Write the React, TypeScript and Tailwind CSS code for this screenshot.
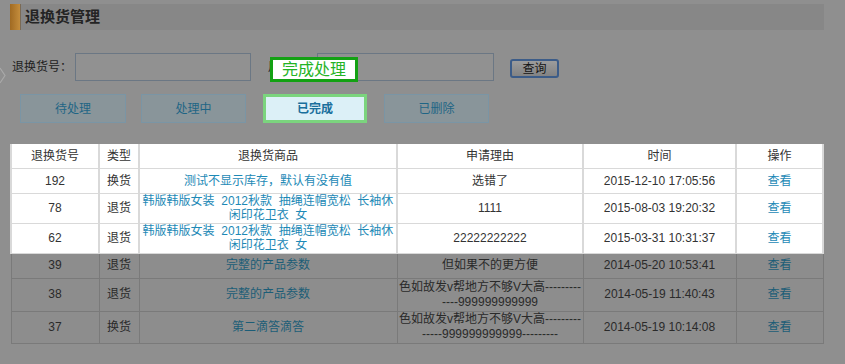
import React from "react";

type Row = {
  id: string;
  kind: string;
  goods: React.ReactNode;
  reason: React.ReactNode;
  time: string;
  h: string;
  lit: boolean;
};

const longGoods = (
  <>
    韩版韩版女装{"\u00a0 "}2012秋款{"\u00a0 "}抽绳连帽宽松{"\u00a0 "}长袖休
    <br />
    闲印花卫衣{"\u00a0 "}女
  </>
);

const rows: Row[] = [
  { id: "192", kind: "换货", goods: "测试不显示库存，默认有没有值", reason: "选错了", time: "2015-12-10 17:05:56", h: "h-[25px]", lit: true },
  { id: "78", kind: "退货", goods: longGoods, reason: "1111", time: "2015-08-03 19:20:32", h: "h-[30px]", lit: true },
  { id: "62", kind: "退货", goods: longGoods, reason: "22222222222", time: "2015-03-31 10:31:37", h: "h-[30px]", lit: true },
  { id: "39", kind: "退货", goods: "完整的产品参数", reason: "但如果不的更方便", time: "2014-05-20 10:53:41", h: "h-[25px]", lit: false },
  {
    id: "38",
    kind: "退货",
    goods: "完整的产品参数",
    reason: (
      <>
        色如故发v帮地方不够V大高---------
        <br />
        ----999999999999
      </>
    ),
    time: "2014-05-19 11:40:43",
    h: "h-[33px]",
    lit: false,
  },
  {
    id: "37",
    kind: "换货",
    goods: "第二滴答滴答",
    reason: (
      <>
        色如故发v帮地方不够V大高---------
        <br />
        -----999999999999---------
      </>
    ),
    time: "2014-05-19 10:14:08",
    h: "h-[32px]",
    lit: false,
  },
];

const tabs = [
  { name: "待处理", cls: "w-[106px]" },
  { name: "处理中", cls: "w-[105px] ml-[15px]" },
  { name: "已完成", cls: "w-[104px] ml-[17px]", active: true },
  { name: "已删除", cls: "w-[105px] ml-[17px]" },
];

const headers = ["退换货号", "类型", "退换货商品", "申请理由", "时间", "操作"];

export default function App() {
  return (
    <div className="relative w-[845px] h-[364px] overflow-hidden bg-[#8f8f8f] text-[12px] text-[#1f1f1f] font-['Liberation_Sans','Noto_Sans_CJK_SC',sans-serif]">
      {/* page edge toggle */}
      <svg className="absolute left-0 top-[67px]" width="6" height="17" viewBox="0 0 6 17">
        <polyline points="0,1 5,8.5 0,16" fill="none" stroke="#a9a9a9" strokeWidth="1.2" />
      </svg>

      {/* title bar */}
      <div className="pt-[4px] pl-[10px] pr-[21px]">
        <div className="flex h-[26px] items-center bg-[#878787]">
          <div className="h-full w-[10px] bg-gradient-to-r from-[#a06a22] to-[#c48d3c]" />
          <div className="h-full w-px bg-[#7a6a55]" />
          <span className="ml-[4px] text-[15px] font-bold text-[#242424]">退换货管理</span>
        </div>
      </div>

      {/* search */}
      <div className="mt-[23px] flex h-[28px] items-center pl-[12px]">
        <span className="w-[63px] text-[#1e1e1e]">退换货号：</span>
        <div className="h-[28px] w-[176px] border border-[#6b7784] bg-[#919191]" />
        <span className="ml-[17px] w-[49px] text-[#1e1e1e]">用户名：</span>
        <div className="h-[28px] w-[177px] border border-[#6b7784] bg-[#919191]" />
        <button className="ml-[16px] mb-[-3px] flex h-[19px] w-[49px] items-center justify-center rounded-[3px] border-2 border-[#3c5c88] bg-gradient-to-b from-[#9c9c9c] to-[#838383] text-[12px] leading-none text-[#141414]">
          查询
        </button>
      </div>

      {/* tooltip label */}
      <div className="absolute left-[270px] top-[57px] flex h-[25px] w-[88px] items-center justify-center border-[3px] border-[#13a113] bg-white text-[16px] leading-none text-[#25b325]">
        完成处理
      </div>

      {/* tabs */}
      <div className="mt-[13px] flex pl-[20px]">
        {tabs.map((t) => (
          <div
            key={t.name}
            className={
              t.active
                ? `${t.cls} flex h-[29px] items-center justify-center border-[3px] border-[#7bd47e] bg-[#dcf0f7] font-bold text-[#1a6f9c]`
                : `${t.cls} flex h-[29px] items-center justify-center border border-[#7a95a5] bg-[#89959a] text-[#1f6585]`
            }
          >
            {t.name}
          </div>
        ))}
      </div>

      {/* table */}
      <div className="mt-[21px] ml-[10px] w-[814px] border-r-2 border-[#7a7a7a]">
        <table className="w-[812px] table-fixed border-collapse text-center">
          <colgroup>
            <col className="w-[88px]" />
            <col className="w-[40px]" />
            <col className="w-[258px]" />
            <col className="w-[186px]" />
            <col className="w-[153px]" />
            <col className="w-[87px]" />
          </colgroup>
          <thead>
            <tr className="h-[24px] bg-white text-[#333]">
              {headers.map((h) => (
                <th key={h} className="border-x-2 border-b border-[#d9d9d9] p-0 font-normal">
                  {h}
                </th>
              ))}
            </tr>
          </thead>
          <tbody>
            {rows.map((r) => {
              const cell = r.lit
                ? "border-x-2 border-y border-[#d9d9d9] p-0 leading-[14px]"
                : "border border-[#7a7a7a] p-0 leading-[15px]";
              const text = r.lit ? "text-[#333]" : "text-[#2a2a2a]";
              const link = r.lit ? "text-[#1c89b6]" : "text-[#1c5d77]";
              return (
                <tr key={r.id} className={`${r.h} ${r.lit ? "bg-white" : "bg-[#8d8d8d]"}`}>
                  <td className={`${cell} ${text}`}>{r.id}</td>
                  <td className={`${cell} ${text}`}>{r.kind}</td>
                  <td className={`${cell} ${link}`}>{r.goods}</td>
                  <td className={`${cell} ${text} whitespace-nowrap`}>{r.reason}</td>
                  <td className={`${cell} ${text}`}>{r.time}</td>
                  <td className={`${cell} ${link}`}>查看</td>
                </tr>
              );
            })}
          </tbody>
        </table>
      </div>
    </div>
  );
}
